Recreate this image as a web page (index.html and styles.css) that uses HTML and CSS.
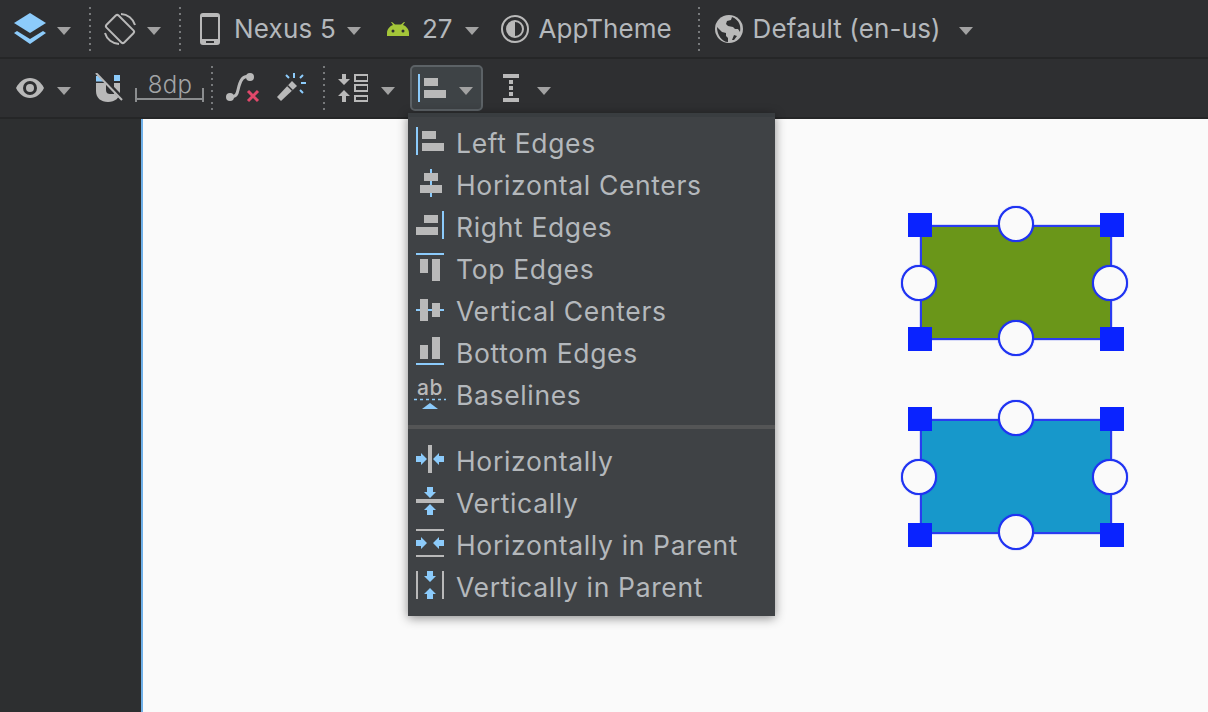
FILE: index.html
```html
<!DOCTYPE html>
<html lang="en">
<head>
    <meta charset="UTF-8">
    <meta name="viewport" content="width=device-width, initial-scale=1.0">
    <title>Layout Editor</title>
    <link rel="stylesheet" href="styles.css">
</head>
<body>
    <div class="toolbar">
        <div class="tool-row">
            <div class="tool tool-layers">
                <svg width="32" height="32" viewBox="0 0 32 32"><path class="blue" d="M16 0L32 10 16 20 0 10z"/><path class="blue" d="M0 20l3-2 13 8 13-8 3 2-16 11z"/></svg>
                <i class="caret"></i>
            </div>
            <div class="dots dots-1"></div>
            <div class="tool tool-rotate">
                <svg width="32" height="32" viewBox="0 0 32 32"><rect class="line" x="7.500" y="3.500" width="17" height="25" rx="2" transform="rotate(-45 16 16)"/><path class="line" d="M17 1a15 15 0 0 1 14 11M15 31A15 15 0 0 1 1 20"/></svg>
                <i class="caret"></i>
            </div>
            <div class="dots dots-2"></div>
            <div class="tool tool-device">
                <svg width="20" height="32" viewBox="0 0 20 32"><path class="gray" d="M3 0h14a3 3 0 0 1 3 3v26a3 3 0 0 1-3 3H3a3 3 0 0 1-3-3V3a3 3 0 0 1 3-3zm-1 4v22h16V4z"/><rect class="dark" x="6" y="28" width="8" height="2"/></svg>
                <span class="label label-device">Nexus 5</span>
                <i class="caret"></i>
            </div>
            <div class="tool tool-api">
                <svg width="24" height="14" viewBox="0 0 24 14"><path class="green" d="M1 14v-3C1 7 4 4 7 3L5 0h1l3 2.500h6L18 0h1l-2 3c3 1 6 4 6 8v3z"/><circle class="dark" cx="7" cy="9" r="1.500"/><circle class="dark" cx="17" cy="9" r="1.500"/></svg>
                <span class="label">27</span>
                <i class="caret"></i>
            </div>
            <div class="tool tool-theme">
                <svg width="28" height="28" viewBox="0 0 28 28"><circle class="line" cx="14" cy="14" r="13"/><circle class="line" cx="14" cy="14" r="8"/><path class="gray" d="M14 6a8 8 0 0 0 0 16z"/></svg>
                <span class="label">AppTheme</span>
            </div>
            <div class="dots dots-3"></div>
            <div class="tool tool-locale">
                <svg width="28" height="28" viewBox="0 0 28 28"><circle class="gray" cx="14" cy="14" r="14"/><path class="dark" d="M2 12l5 5 4 1v3l2 2v4C7 27 2 20 2 12zM17 2l-1 3-4 1-1 3 2 2 5 1 2 2h3l2 3c1-5 0-12-8-15zM19 20l3 1-3 4-2 0z"/></svg>
                <span class="label label-locale">Default (en-us)</span>
                <i class="caret caret-locale"></i>
            </div>
        </div>
        <div class="tool-row">
            <div class="tool tool-eye">
                <svg width="28" height="20" viewBox="0 0 28 20"><path class="gray" d="M14 0c6 0 11 4 14 10-3 6-8 10-14 10S3 16 0 10C3 4 8 0 14 0z"/><circle class="dark" cx="14" cy="10" r="7"/><circle class="gray" cx="14" cy="10" r="4"/></svg>
                <i class="caret"></i>
            </div>
            <div class="tool tool-magnet">
                <svg width="28" height="30" viewBox="0 0 28 30"><path class="blue" d="M1 3h5l5 5.500H1zM19 2h6v6h-6z"/><path class="gray" d="M1 10h10v7c0 3 2 4 4 4h4v-11h6v8c0 7-5 11-12 11S1 25 1 18z"/><path class="slash-gap" d="M3 0l24 25"/><path class="slash" d="M1 0l26 27"/></svg>
            </div>
            <div class="margin-ruler">
                <span class="margin-value">8dp</span>
            </div>
            <div class="dots dots-4"></div>
            <div class="tool tool-path">
                <svg width="34" height="30" viewBox="0 0 34 30"><path class="thick" d="M4 24c8 0 7-4 9-11s4-10 11-10"/><circle class="gray" cx="4" cy="24" r="4"/><circle class="gray" cx="24" cy="4" r="4"/><path class="cross" d="M22 18l10 10M32 18L22 28"/></svg>
            </div>
            <div class="tool tool-wand">
                <svg width="30" height="30" viewBox="0 0 30 30"><path class="gray" d="M0 24L15 8l5 5L4 28z"/><path class="dark" d="M10 13l1-1 5 5-1 1z"/><path class="spark" d="M17 0v5M9 2l3 3M26 2l-3 3M29 10h-5M26 20l-3-3"/></svg>
            </div>
            <div class="dots dots-5"></div>
            <div class="tool tool-pack">
                <svg width="30" height="28" viewBox="0 0 30 28"><path class="gray" d="M4 0h4v5h4l-6 6-6-6h4zM6 16l6 6H8v6H4v-6H0z"/><path class="line" d="M17 1h13v6H17zM17 11h13v6H17zM17 22h13v5H17z"/></svg>
                <i class="caret"></i>
            </div>
            <div class="tool tool-align">
                <svg width="28" height="28" viewBox="0 0 28 28"><rect class="blue" width="2" height="28"/><rect class="gray" x="6" y="4" width="14" height="8"/><rect class="gray" x="6" y="16" width="22" height="8"/></svg>
                <i class="caret"></i>
            </div>
            <div class="tool tool-distribute">
                <svg width="16" height="28" viewBox="0 0 16 28"><path class="gray" d="M0 0h16v4H0zM0 24h16v4H0zM6 6h4v4H6zM6 12h4v4H6zM6 18h4v4H6z"/></svg>
                <i class="caret"></i>
            </div>
        </div>
    </div>

    <div class="workspace">
        <div class="palette"></div>
        <div class="canvas">
            <div class="widget widget-green">
                <i class="corner corner-tl"></i><i class="corner corner-tr"></i><i class="corner corner-bl"></i><i class="corner corner-br"></i>
                <i class="anchor anchor-top"></i><i class="anchor anchor-left"></i><i class="anchor anchor-right"></i><i class="anchor anchor-bottom"></i>
            </div>
            <div class="widget widget-blue">
                <i class="corner corner-tl"></i><i class="corner corner-tr"></i><i class="corner corner-bl"></i><i class="corner corner-br"></i>
                <i class="anchor anchor-top"></i><i class="anchor anchor-left"></i><i class="anchor anchor-right"></i><i class="anchor anchor-bottom"></i>
            </div>
        </div>
    </div>

    <!-- Align dropdown, open over the canvas -->
    <div class="menu">
        <div class="menu-item">
            <svg width="28" height="28" viewBox="0 0 28 28"><rect class="blue" width="2" height="28"/><rect class="gray" x="6" y="4" width="14" height="8"/><rect class="gray" x="6" y="16" width="22" height="8"/></svg>
            <span>Left Edges</span>
        </div>
        <div class="menu-item">
            <svg width="28" height="28" viewBox="0 0 28 28"><rect class="blue" x="14" width="2" height="28"/><rect class="gray" x="8" y="4" width="14" height="8"/><rect class="gray" x="4" y="16" width="22" height="8"/></svg>
            <span>Horizontal Centers</span>
        </div>
        <div class="menu-item">
            <svg width="28" height="28" viewBox="0 0 28 28"><rect class="blue" x="26" width="2" height="28"/><rect class="gray" x="8" y="4" width="14" height="8"/><rect class="gray" y="16" width="22" height="8"/></svg>
            <span>Right Edges</span>
        </div>
        <div class="menu-item">
            <svg width="28" height="28" viewBox="0 0 28 28"><rect class="blue" width="28" height="2"/><rect class="gray" x="4" y="6" width="8" height="14"/><rect class="gray" x="16" y="6" width="8" height="22"/></svg>
            <span>Top Edges</span>
        </div>
        <div class="menu-item">
            <svg width="28" height="28" viewBox="0 0 28 28"><rect class="blue" y="14" width="28" height="2"/><rect class="gray" x="4" y="4" width="8" height="22"/><rect class="gray" x="16" y="8" width="8" height="14"/></svg>
            <span>Vertical Centers</span>
        </div>
        <div class="menu-item">
            <svg width="28" height="28" viewBox="0 0 28 28"><rect class="blue" y="26" width="28" height="2"/><rect class="gray" x="4" y="8" width="8" height="14"/><rect class="gray" x="16" y="0" width="8" height="22"/></svg>
            <span>Bottom Edges</span>
        </div>
        <div class="menu-item">
            <svg width="28" height="28" viewBox="0 0 28 28"><text class="ab" x="14" y="16" text-anchor="middle">ab</text><path class="dash" d="M-2 20.500h32"/><path class="blue" d="M14 24l8 6H6z"/></svg>
            <span>Baselines</span>
        </div>
        <div class="menu-sep"></div>
        <div class="menu-item">
            <svg width="28" height="28" viewBox="0 0 28 28"><rect class="gray" x="12" width="4" height="28"/><path class="blue" d="M0 11h5V8l6 6-6 6v-3H0zM28 11h-5V8l-6 6 6 6v-3h5z"/></svg>
            <span>Horizontally</span>
        </div>
        <div class="menu-item">
            <svg width="28" height="28" viewBox="0 0 28 28"><rect class="gray" y="12" width="28" height="4"/><path class="blue" d="M11 0v5H8l6 6 6-6h-3V0zM11 28v-5H8l6-6 6 6h-3v5z"/></svg>
            <span>Vertically</span>
        </div>
        <div class="menu-item">
            <svg width="28" height="28" viewBox="0 0 28 28"><path class="gray" d="M0 0h28v2H0zM0 26h28v2H0z"/><path class="blue" d="M0 11h5V8l6 6-6 6v-3H0zM28 11h-5V8l-6 6 6 6v-3h5z"/></svg>
            <span>Horizontally in Parent</span>
        </div>
        <div class="menu-item">
            <svg width="28" height="28" viewBox="0 0 28 28"><path class="gray" d="M0 0h2v28H0zM26 0h2v28h-2z"/><path class="blue" d="M11 0v5H8l6 6 6-6h-3V0zM11 28v-5H8l6-6 6 6h-3v5z"/></svg>
            <span>Vertically in Parent</span>
        </div>
    </div>
</body>
</html>
```

FILE: styles.css
```css
html, body {
    margin: 0;
    height: 712px;
    overflow: hidden;
    background: #2d2f30;
    font-family: Inter, Roboto, sans-serif;
}

/* Toolbar rows */
.toolbar {
    background: #2e2f31;
}

.tool-row {
    display: flex;
    align-items: center;
    height: 57px;
    padding-left: 14px;
    border-bottom: 2px solid #252627;
}

.tool-row + .tool-row {
    height: 58px;
    padding-left: 16px;
}

.tool {
    display: flex;
    align-items: center;
    gap: 11px;
}

.label {
    font-size: 26px;
    color: #b4b8bc;
}

.label-device { letter-spacing: 0.2px; margin-left: -1px; }
.label-locale { letter-spacing: 0.15px; }

.caret {
    width: 0;
    height: 0;
    margin-top: 5px;
    border-left: 7px solid transparent;
    border-right: 7px solid transparent;
    border-top: 8px solid #a2a2a2;
}

.dots {
    width: 2px;
    height: 44px;
    background: repeating-linear-gradient(to bottom, #77797b 0, #77797b 2px, transparent 2px, transparent 6px);
}

/* horizontal spots of the toolbar items */
.dots-1 { margin-left: 18px; }
.tool-rotate { margin-left: 13px; }
.dots-2 { margin-left: 18px; }
.tool-device { margin-left: 19px; gap: 15px; }
.tool-device .caret { margin-left: -4px; }
.tool-api { margin-left: 25px; gap: 12px; }
.tool-theme { margin-left: 22px; gap: 10px; }
.dots-3 { margin-left: 26px; }
.tool-locale { margin-left: 15px; gap: 10px; }
.caret-locale { margin-left: 8px; }

.tool-eye { gap: 13px; }
.tool-magnet { margin-left: 24px; }
.margin-ruler {
    width: 69px;
    height: 14px;
    margin-left: 12px;
    margin-top: 14px;
    display: flex;
    justify-content: center;
    background:
        linear-gradient(#8b8d8f, #8b8d8f) left / 2px 100% no-repeat,
        linear-gradient(#8b8d8f, #8b8d8f) right / 2px 100% no-repeat,
        linear-gradient(#8b8d8f, #8b8d8f) 0 10px / 100% 2px no-repeat;
}
.margin-value {
    height: 24px;
    margin-top: -15px;
    padding-left: 1px;
    font-size: 24px;
    font-weight: 300;
    line-height: 24px;
    letter-spacing: 0.3px;
    color: #a2a4a6;
}
.dots-4 { margin-left: 7px; }
.tool-path { margin-left: 13px; }
.tool-wand { margin-left: 17px; }
.dots-5 { margin-left: 16px; }
.tool-pack { margin-left: 13px; gap: 13px; }
.tool-align {
    width: 73px;
    height: 46px;
    margin-left: 15px;
    padding-left: 6px;
    gap: 13px;
    box-sizing: border-box;
    background: #3e4346;
    border: 2px solid #5c6266;
    border-radius: 5px;
}
.tool-distribute { margin-left: 20px; gap: 18px; }

/* Icon paints */
.blue { fill: #8ccbfb; }
.gray { fill: #b9b9b9; }
.dark { fill: #2e2f31; }
.green { fill: #a4c639; }
.line { fill: none; stroke: #b9b9b9; stroke-width: 2; }
.thick { fill: none; stroke: #b9b9b9; stroke-width: 3; }
.slash { fill: none; stroke: #b9b9b9; stroke-width: 2; }
.slash-gap { fill: none; stroke: #2e2f31; stroke-width: 4; }
.cross { fill: none; stroke: #e0486a; stroke-width: 3; }
.spark { fill: none; stroke: #8ccbfb; stroke-width: 2; }
.dash { fill: none; stroke: #8ccbfb; stroke-width: 1.5; stroke-dasharray: 3 3; }
.ab { fill: #b9b9b9; font-size: 21px; font-weight: 500; }

/* Design surface */
.workspace {
    display: flex;
    height: 593px;
}

.palette {
    width: 141px;
    background: #2d2f30;
}

.canvas {
    position: relative;
    flex: 1;
    background: #fafafa;
    border-left: 2px solid #6fb0e8;
}

.widget {
    position: absolute;
    left: 777px;
    width: 192px;
    height: 115px;
    box-sizing: border-box;
    border: 2px solid #2a3cf0;
    box-shadow: 0 0 1px #2a3cf0;
}
.widget-green { top: 106px; background: #6a9619; }
.widget-blue { top: 300px; background: #1798cb; }

.corner {
    position: absolute;
    width: 24px;
    height: 24px;
    background: #0a23ff;
}
.corner-tl { left: -14px; top: -14px; }
.corner-tr { right: -14px; top: -14px; }
.corner-bl { left: -14px; bottom: -13px; }
.corner-br { right: -14px; bottom: -13px; }
.widget-blue .corner-bl, .widget-blue .corner-br { bottom: -15px; }

.anchor {
    position: absolute;
    width: 36px;
    height: 36px;
    box-sizing: border-box;
    border: 2px solid #1f33f2;
    border-radius: 50%;
    background: #fafafa;
    box-shadow: 0 0 1px #1f33f2;
}
.anchor-top { left: calc(50% - 18px); top: -21px; }
.anchor-bottom { left: calc(50% - 18px); bottom: -18px; }
.anchor-left { left: -21px; top: calc(50% - 18px); }
.anchor-right { right: -18px; top: calc(50% - 18px); }

/* Align dropdown */
.menu {
    position: absolute;
    left: 408px;
    top: 113px;
    width: 367px;
    height: 503px;
    box-sizing: border-box;
    padding: 3px 0 9px;
    background: #3f4245;
    border-top: 4px solid #393d40;
    box-shadow: 0 2px 10px rgba(0, 0, 0, 0.45);
}

.menu-item {
    display: flex;
    align-items: center;
    gap: 12px;
    height: 42px;
    padding-left: 8px;
    font-size: 26.5px;
    letter-spacing: 0.65px;
    color: #b4b8bc;
}

.menu-item svg {
    overflow: visible;
    flex: none;
}

.menu-item span {
    margin-top: 3px;
}

.menu-sep {
    height: 4px;
    margin: 11px 0 9px;
    background: #545556;
}
```
